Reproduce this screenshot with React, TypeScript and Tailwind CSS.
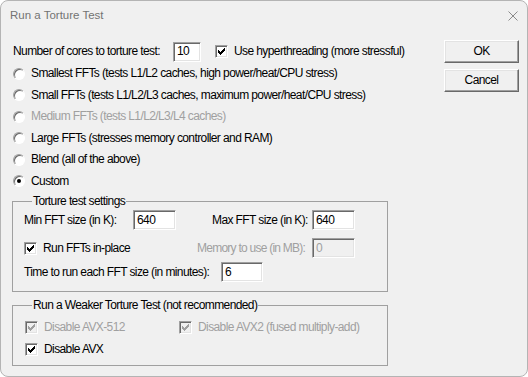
import type { ReactNode } from 'react'

const font = "font-['Liberation_Sans',Arial,sans-serif]"

function Check({ disabled = false }: { disabled?: boolean }) {
  const fill = disabled ? '#a0a0a0' : '#000'
  const cols = [2, 3, 4, 3, 2, 1, 0]
  return (
    <svg width="7" height="7" viewBox="0 0 7 7" shapeRendering="crispEdges">
      {cols.map((y, x) => (
        <rect key={x} x={x} y={y} width="1" height="3" fill={fill} />
      ))}
    </svg>
  )
}

function CheckBox({ label, disabled = false, checked = true }: { label: string; disabled?: boolean; checked?: boolean }) {
  return (
    <div className="flex items-center">
      <div
        className={`w-[13px] h-[13px] flex items-center justify-center border border-t-[#a0a0a0] border-l-[#a0a0a0] border-b-white border-r-white shadow-[inset_1px_1px_0_#696969,inset_-1px_-1px_0_#e3e3e3] ${
          disabled ? 'bg-[#f0f0f0]' : 'bg-white'
        }`}
      >
        {checked && <Check disabled={disabled} />}
      </div>
      <span className={`ml-[6px] ${disabled ? 'text-[#a0a0a0]' : 'text-black'}`}>{label}</span>
    </div>
  )
}

function Radio({ label, selected = false, disabled = false }: { label: string; selected?: boolean; disabled?: boolean }) {
  return (
    <div className="flex items-center h-[21.5px]">
      <div className="ml-[1px] w-[12px] h-[12px] rounded-full border border-t-[#a0a0a0] border-l-[#a0a0a0] border-b-white border-r-white bg-white shadow-[inset_1px_1px_0_#696969] flex items-center justify-center">
        {selected && <div className="w-[4px] h-[4px] rounded-full bg-black" />}
      </div>
      <span className={`ml-[6px] ${disabled ? 'text-[#a0a0a0]' : 'text-black'}`}>{label}</span>
    </div>
  )
}

function TextBox({ value, width, disabled = false }: { value: string; width: string; disabled?: boolean }) {
  return (
    <div
      className={`${width} h-[20px] flex items-center pl-[3px] border border-t-[#a0a0a0] border-l-[#a0a0a0] border-b-white border-r-white shadow-[inset_1px_1px_0_#696969,inset_-1px_-1px_0_#e3e3e3] ${
        disabled ? 'bg-[#f0f0f0] text-[#a0a0a0]' : 'bg-white text-black'
      }`}
    >
      {value}
    </div>
  )
}

function Button({ children }: { children: ReactNode }) {
  return (
    <div className="w-[75px] h-[23px] flex items-center justify-center border border-t-white border-l-white border-b-[#696969] border-r-[#696969] shadow-[inset_-1px_-1px_0_#a0a0a0,inset_1px_1px_0_#e3e3e3] bg-[#f0f0f0] text-black">
      {children}
    </div>
  )
}

function GroupBox({ title, children, className = '' }: { title: string; children: ReactNode; className?: string }) {
  return (
    <fieldset className={`w-[376px] border border-[#a0a0a0] pl-[11px] ${className}`}>
      <legend className="ml-[8px] px-[1px] leading-[14px] text-black">{title}</legend>
      {children}
    </fieldset>
  )
}

export default function App() {
  return (
    <div className={`w-[528px] h-[377px] bg-[#f0f0f0] border border-[#b4b4b4] rounded-[8px] flex flex-col overflow-hidden whitespace-nowrap text-[12px] tracking-[-0.6px] leading-[15px] ${font}`}>
      <div className="h-[29px] flex items-center justify-between pl-[9px] pr-[8px] tracking-normal">
        <span className="text-[11.5px] text-[#737373]">Run a Torture Test</span>
        <svg width="10" height="10" viewBox="0 0 10 10" className="mr-[1px]">
          <path d="M0.5 0.5 L9.5 9.5 M9.5 0.5 L0.5 9.5" stroke="#8a8a8a" strokeWidth="1" />
        </svg>
      </div>

      <div className="flex pt-[10px]">
        <div className="w-[443px] pl-[11px] flex flex-col">
          <div className="flex items-center h-[23px]">
            <span className="ml-[1px] w-[160px]">Number of cores to torture test:</span>
            <TextBox value="10" width="w-[28px]" />
            <div className="ml-[14px]">
              <CheckBox label="Use hyperthreading (more stressful)" />
            </div>
          </div>

          <Radio label="Smallest FFTs (tests L1/L2 caches, high power/heat/CPU stress)" />
          <Radio label="Small FFTs (tests L1/L2/L3 caches, maximum power/heat/CPU stress)" />
          <Radio label="Medium FFTs (tests L1/L2/L3/L4 caches)" disabled />
          <Radio label="Large FFTs (stresses memory controller and RAM)" />
          <Radio label="Blend (all of the above)" />
          <Radio label="Custom" selected />

          <GroupBox title="Torture test settings" className="mt-[2px] pb-[9px]">
            <div className="flex items-center h-[20px] mt-[2px]">
              <span className="w-[109px]">Min FFT size (in K):</span>
              <TextBox value="640" width="w-[43px]" />
              <span className="ml-[36px] w-[100px]">Max FFT size (in K):</span>
              <TextBox value="640" width="w-[43px]" />
            </div>
            <div className="flex items-center h-[20px] mt-[8px]">
              <div className="w-[173px]">
                <CheckBox label="Run FFTs in-place" />
              </div>
              <span className="w-[115px] text-[#a0a0a0] tracking-[-0.75px]">Memory to use (in MB):</span>
              <TextBox value="0" width="w-[43px]" disabled />
            </div>
            <div className="flex items-center h-[20px] mt-[4px]">
              <span className="w-[197px]">Time to run each FFT size (in minutes):</span>
              <TextBox value="6" width="w-[42px]" />
            </div>
          </GroupBox>

          <GroupBox title="Run a Weaker Torture Test (not recommended)" className="mt-[6px] pb-[6px]">
            <div className="flex items-center h-[20px] mt-[5px] pl-[1px]">
              <div className="w-[154px]">
                <CheckBox label="Disable AVX-512" disabled />
              </div>
              <CheckBox label="Disable AVX2 (fused multiply-add)" disabled />
            </div>
            <div className="flex items-center h-[20px] mt-[2px] pl-[1px]">
              <CheckBox label="Disable AVX" />
            </div>
          </GroupBox>
        </div>

        <div className="flex flex-col gap-[6px]">
          <Button>OK</Button>
          <Button>Cancel</Button>
        </div>
      </div>
    </div>
  )
}
